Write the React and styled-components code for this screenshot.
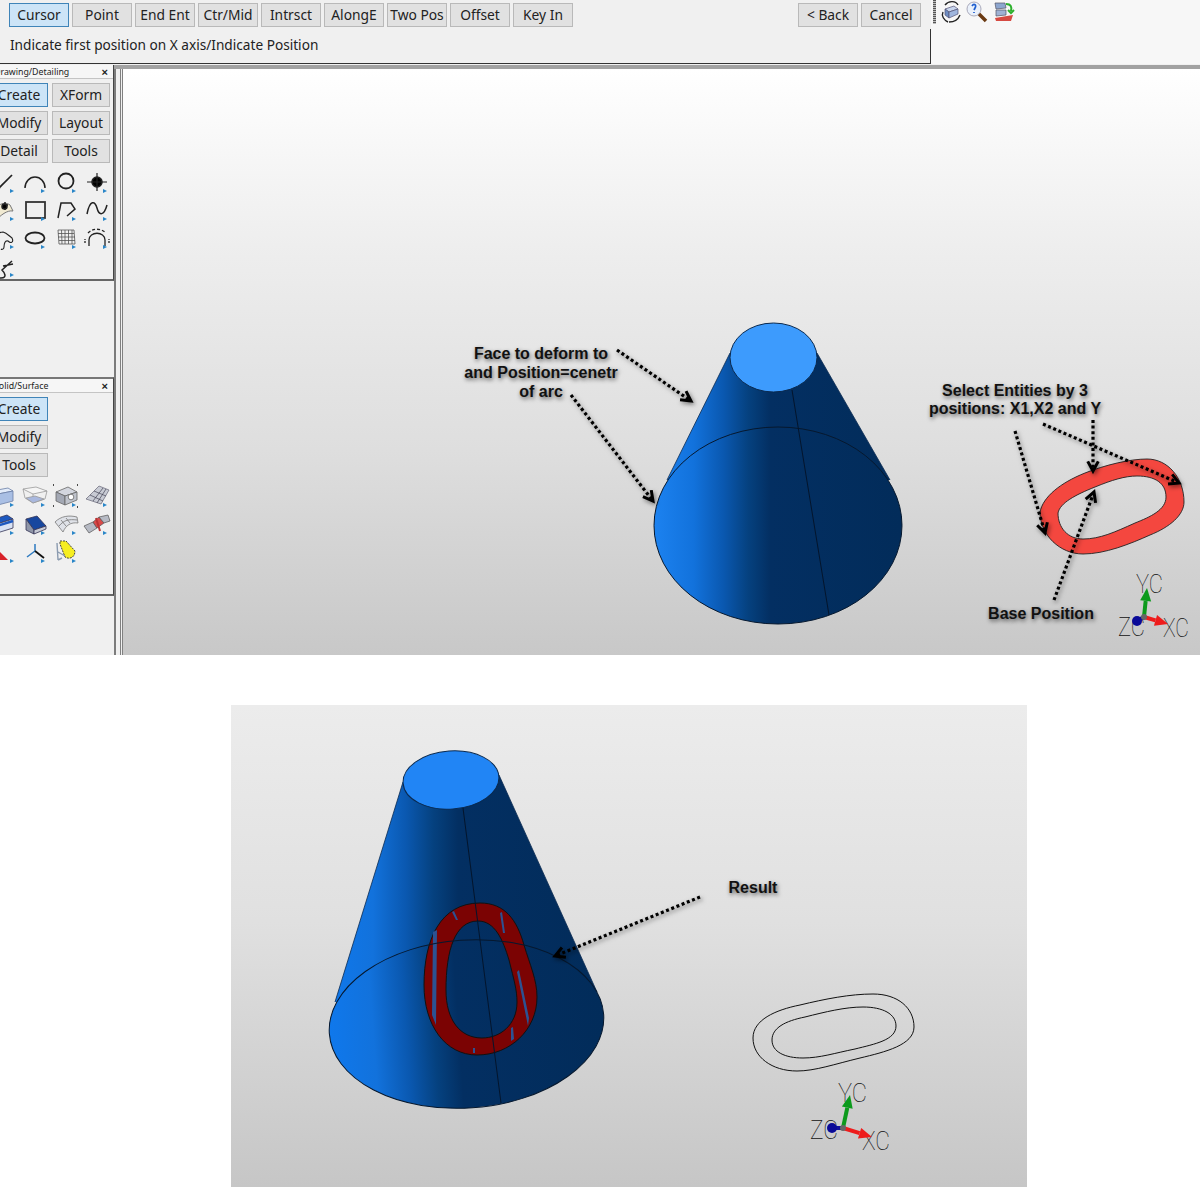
import React from "react";
import styled, { createGlobalStyle } from "styled-components";

const Global = createGlobalStyle`
  html, body { margin: 0; padding: 0; background: #fff; }
  body { font-family: "Noto Sans", "Liberation Sans", sans-serif; overflow: hidden; }
`;

const Page = styled.div`
  width: 1200px;
  height: 1187px;
  overflow: hidden;
  background: #fff;
  display: flex;
  flex-direction: column;
`;
const AppWindow = styled.div`
  width: 1200px;
  height: 655px;
  display: flex;
  flex-direction: column;
  background: #f0f0f0;
  overflow: hidden;
`;
const TopBar = styled.div`
  display: flex;
  height: 64px;
  background: #f7f7f7;
  flex: none;
`;
const PromptPanel = styled.div`
  width: 931px;
  display: flex;
  flex-direction: column;
  background: #f0f0f0;
`;
const ButtonRow = styled.div`
  height: 29px;
  box-sizing: border-box;
  padding: 3px 10px 0 9px;
  display: flex;
  gap: 3px;
`;
const Spacer = styled.div`
  flex: 1;
`;
const CadButton = styled.button`
  box-sizing: border-box;
  width: ${(p) => p.$w || 60}px;
  height: 24px;
  margin: 0;
  padding: 0 0 1px;
  flex: none;
  font: 13.8px "Noto Sans", sans-serif;
  color: #222;
  background: ${(p) => (p.$active ? "#cce4f7" : "#e1e1e1")};
  border: 1px solid ${(p) => (p.$active ? "#3f84b8" : "#b9b9b9")};
  white-space: nowrap;
`;
const PromptRow = styled.div`
  flex: 1;
  box-sizing: border-box;
  padding: 6px 0 0 10px;
  font-size: 13.65px;
  line-height: 20px;
  color: #222;
  border-right: 1px solid #333;
  border-bottom: 1px solid #333;
`;
const QuickTools = styled.div`
  display: flex;
  align-items: flex-start;
  padding-left: 2px;
`;
const Grip = styled.div`
  width: 3px;
  height: 24px;
  margin-right: 1px;
  background: repeating-linear-gradient(#555 0 1px, #bbb 1px 2px);
`;
const QuickIcon = styled.svg`
  width: 26px;
  height: 24px;
  margin-right: 1px;
  display: block;
`;
const Body = styled.div`
  flex: 1;
  display: flex;
  min-height: 0;
`;
const Sidebar = styled.div`
  width: 114px;
  flex: none;
  padding-top: 1px;
  overflow: hidden;
`;
const Dock = styled.div`
  box-sizing: border-box;
  width: 114px;
  height: ${(p) => p.$h}px;
  margin-top: ${(p) => p.$mt || 0}px;
  border-right: 1px solid #444;
  border-bottom: 2px solid #666;
  border-top: ${(p) => (p.$mt ? "2px solid #777" : "none")};
  background: #f0f0f0;
`;
const DockTitle = styled.div`
  height: 13px;
  margin-left: -6px;
  padding-right: 5px;
  display: flex;
  justify-content: space-between;
  align-items: center;
  background: #f6f6f6;
  border-bottom: 1px solid #c4c4c4;
  font-size: 8.8px;
  color: #222;
`;
const DockClose = styled.span`
  font: bold 11px "Liberation Sans", sans-serif;
`;
const DockTabs = styled.div`
  margin: 4px 0 0 -10px;
  display: grid;
  grid-template-columns: 58px 58px;
  column-gap: 4px;
  row-gap: 4px;
`;
const IconGrid = styled.div`
  margin: 5px 0 0 -11px;
  display: grid;
  grid-template-columns: repeat(4, 30px);
  column-gap: 1px;
  grid-auto-rows: 28px;
`;
const Glyph = styled.svg`
  width: 30px;
  height: 28px;
  display: block;
`;
const Workspace = styled.div`
  flex: 1;
  margin-top: 1px;
  border-top: 4px solid #a2a2a2;
  display: flex;
  min-width: 0;
`;
const Gutter = styled.div`
  box-sizing: border-box;
  width: 9px;
  flex: none;
  border-left: 2px solid #7c7c7c;
  border-right: 3px double #808080;
  background: #f0f0f0;
`;
const Viewport = styled.div`
  position: relative;
  flex: 1;
  background: linear-gradient(#ffffff 0%, #eeeeee 30%, #dedede 65%, #c8c8c8 100%);
`;
const Scene = styled.svg`
  display: block;
  width: 100%;
  height: 100%;
`;
const Callout = styled.div`
  position: absolute;
  left: ${(p) => p.$cx}px;
  top: ${(p) => p.$top}px;
  transform: translateX(-50%);
  text-align: center;
  white-space: nowrap;
  font: bold 16px/${(p) => p.$lh || 19}px "Liberation Sans", Arial, sans-serif;
  color: #111;
  text-shadow: 1px 2px 4px rgba(0, 0, 0, 0.6);
`;
const AxisLabel = styled.text`
  font-family: Roboto, "Liberation Sans", sans-serif;
  font-weight: 100;
  font-size: 25px;
  fill: #111;
`;
const ResultFigure = styled.div`
  position: relative;
  box-sizing: border-box;
  width: 796px;
  height: 482px;
  margin: 50px 0 0 231px;
  flex: none;
  background: linear-gradient(#ececec 0%, #e0e0e0 45%, #c6c6c6 100%);
`;

const Marker = () => <polygon points="21,21 25,23 21,25" fill="#2a86c8" stroke="none" />;

const Icon = ({ children }) => (
  <Glyph viewBox="0 0 30 28" fill="none" stroke="#222" strokeWidth="1.5">
    {children}
    <Marker />
  </Glyph>
);

const drawIcons = [
  <path key="a" d="M3 27 L23 7" strokeWidth="1.7" />,
  <path key="b" d="M5 20 A10 11 0 0 1 25 20" />,
  <circle key="c" cx="15" cy="13" r="7.5" strokeWidth="1.8" />,
  <g key="d"><circle cx="15" cy="14" r="5" fill="#000" /><path d="M5 14H25M15 5V23" strokeWidth="1.2" /></g>,
  <g key="e"><path d="M3 20 C6 8 16 5 21 9 L24 15 C18 14 12 19 6 25Z" fill="#f1ead2" stroke="#777" strokeWidth="1" /><path d="M13 9H19M16 6V14" /><circle cx="15.500" cy="10.500" r="2.500" fill="#000" /></g>,
  <rect key="f" x="6" y="6" width="19" height="16" stroke="#333" strokeWidth="1.8" />,
  <path key="g" d="M7 22 L10 7 L20 7 L24 13 L16 20" />,
  <path key="h" d="M5 18 C8 3 13 5 15 12 C17 20 22 20 25 9" />,
  <g key="i"><path d="M4 27 C1 20 9 19 10 14 C8 10 10 8 14 8 C18 9 20 12 23 14 C25 18 22 20 19 17 C16 16 15 20 15 23 C15 25 13 26 12 25" strokeWidth="1.1" /><path d="M6 8 C9 5 11 7 11 9" strokeWidth="1" /></g>,
  <ellipse key="j" cx="15" cy="14" rx="9.500" ry="5.500" strokeWidth="1.8" />,
  <g key="k" stroke="#555" strokeWidth="0.8"><path d="M7 6H23L24 20H8ZM7 9.500H23M7 13H24M8 16.500H24M10.500 6L11 20M14 6V20M17.500 6V20M21 6L21 20" /></g>,
  <g key="l" strokeWidth="1.300"><path d="M7 22V16 C7 7 23 7 23 16V22" /><path d="M3 19 V15 M27 19V15" strokeDasharray="2 1" /><path d="M6 9 C11 4 19 4 24 9" strokeDasharray="3 2" /></g>,
  <g key="m" strokeWidth="1.500"><path d="M4 21 C9 20 3 26 12 26 C19 26 15 20 13 18 L23 9 M14 14 L24 12" /><path d="M2 23 L8 7" stroke="#3d6fb5" strokeWidth="2.500" /></g>,
];

const solidIcons = [
  <g key="a" stroke="#6b7fa6" strokeWidth="0.8"><path d="M3 9 L19 6 L24 9 L9 12Z" fill="#e3ecfa" /><path d="M3 9 L9 12 V23 L3 20Z" fill="#7f9bcf" /><path d="M9 12 L24 9 V19 L9 23Z" fill="#a9bfe4" /></g>,
  <g key="b" stroke="#999" strokeWidth="0.800"><path d="M3 7 L16 5 L27 9 L13 12Z" fill="#f5f5f5" /><path d="M5 16 L13 21 L25 17 L27 9 M3 7 L5 16 M13 12 L13 21" /><path d="M6 16 L15 14 L24 17 L13 21Z" fill="#a9b8de" /></g>,
  <g key="c" stroke="#666" strokeWidth="0.800"><path d="M5 10 L17 5 L26 10 L14 14Z" fill="#d3d6de" /><path d="M5 10 L14 14 V23 L5 19Z" fill="#a3a8b4" /><path d="M14 14 L26 10 V18 L14 23Z" fill="#bfc3cc" /><circle cx="20" cy="15" r="2.800" fill="#fff" /><path d="M2 3H4M26 3H28M2 24H4M26 25H28" stroke="#111" strokeWidth="1.400" strokeDasharray="1 1" /></g>,
  <g key="d" stroke="#667" strokeWidth="0.700"><path d="M4 17 L17 4 L27 8 L19 22Z" fill="#c8cbd4" /><path d="M8 13 L21 19 M12 9 L24 14 M11 19 L21 6 M15 21 L24 7" stroke="#445" /></g>,
  <g key="e" stroke="#335" strokeWidth="0.800"><path d="M2 10 L18 5 L24 9 L8 14Z" fill="#1d59c0" /><path d="M2 10 L8 14 V23 L2 19Z" fill="#8e9ab4" /><path d="M8 14 L24 9 V18 L8 23Z" fill="#d8e2f4" /><path d="M8 16 L24 11" stroke="#1d59c0" strokeWidth="2.500" /></g>,
  <g key="f" stroke="#335" strokeWidth="0.800"><path d="M6 9 L17 6 L26 16 L14 20Z" fill="#17479f" /><path d="M6 9 L14 20 V24 L6 20Z" fill="#8f96a8" /><path d="M14 20 L26 16 V19 L14 24Z" fill="#c7cbd6" /></g>,
  <g key="g" stroke="#777" strokeWidth="0.800"><path d="M4 12 C10 6 18 5 26 7 L27 13 C20 12 15 15 12 22 Z" fill="#dfe2e8" /><path d="M8 16 C13 10 18 9 26 10 M15 8 L19 13 M10 10 L15 16" /></g>,
  <g key="h" stroke="#555" strokeWidth="0.700"><path d="M2 16 L11 12 L15 18 L7 23Z" fill="#b6bac4" /><path d="M11 12 L17 7 L22 13 L15 18Z" fill="#d94a4a" /><path d="M17 7 L26 5 L28 11 L22 13Z" fill="#b6bac4" /><path d="M14 8 L18 21" stroke="#b33" strokeWidth="2" /></g>,
  <g key="i" stroke="none"><path d="M5 8 L19 22 L10 22Z" fill="#d8232a" /><path d="M5 6 L9 20" stroke="#5c6e8e" strokeWidth="1.500" /></g>,
  <g key="j"><path d="M15 13 L15 6" stroke="#2d7ac0" strokeWidth="1.500" /><path d="M15 13 L7 19" stroke="#2d7ac0" strokeWidth="1.500" /><path d="M15 13 L24 20" stroke="#111" strokeWidth="1.800" /></g>,
  <g key="k" strokeWidth="1"><path d="M9 3 L15 3 L24 13 C24 19 19 22 14 19 L9 6Z" fill="#f6ee20" stroke="#444" strokeDasharray="2 1" /><path d="M6 5 L7 22 M7 14 L14 18 M7 22 L11 20" stroke="#8b9bb0" strokeWidth="1.400" /></g>,
];

const Arrow = ({ x1, y1, x2, y2 }) => {
  const a = Math.atan2(y2 - y1, x2 - x1);
  const h = 11;
  const w = 0.5;
  const p = (ang) => `${x2 - h * Math.cos(ang)} ${y2 - h * Math.sin(ang)}`;
  return (
    <g filter="url(#callShadow)">
      <line x1={x1} y1={y1} x2={x2 - 3 * Math.cos(a)} y2={y2 - 3 * Math.sin(a)} stroke="#000" strokeWidth="3.2" strokeDasharray="3 2.6" />
      <path d={`M${p(a - w)} L${x2} ${y2} L${p(a + w)}`} fill="none" stroke="#000" strokeWidth="3" />
    </g>
  );
};

const Shadow = ({ id }) => (
  <filter id={id} x="-30%" y="-30%" width="170%" height="170%">
    <feDropShadow dx="1.500" dy="2" stdDeviation="2" floodColor="#000" floodOpacity="0.5" />
  </filter>
);

const Triad = ({ ox, oy, bx, by, gx, gy, rx, ry }) => {
  const tip = (tx, ty, col) => {
    const a = Math.atan2(ty - oy, tx - ox);
    const l = 13;
    const w = 5.5;
    const bcx = tx - l * Math.cos(a);
    const bcy = ty - l * Math.sin(a);
    const nx = -Math.sin(a) * w;
    const ny = Math.cos(a) * w;
    return (
      <g>
        <line x1={ox} y1={oy} x2={bcx} y2={bcy} stroke={col} strokeWidth="4" />
        <polygon points={`${tx},${ty} ${bcx + nx},${bcy + ny} ${bcx - nx},${bcy - ny}`} fill={col} />
      </g>
    );
  };
  return (
    <g>
      {tip(gx, gy, "#0c9a1c")}
      {tip(rx, ry, "#ee1c1c")}
      <line x1={ox} y1={oy} x2={bx} y2={by} stroke="#10109c" strokeWidth="4" />
      <circle cx={bx} cy={by} r="5" fill="#0a0a98" />
      <circle cx={ox} cy={oy} r="3" fill="#666" />
    </g>
  );
};

const Axis = ({ x, y, w, children }) => (
  <AxisLabel x={x} y={y} textLength={w} lengthAdjust="spacingAndGlyphs">{children}</AxisLabel>
);

const ConeGrad = ({ id, x1, x2, c0 }) => (
  <linearGradient id={id} gradientUnits="userSpaceOnUse" x1={x1} x2={x2} y1="0" y2="0">
    <stop offset="0" stopColor={c0} />
    <stop offset="0.16" stopColor="#1272dc" />
    <stop offset="0.28" stopColor="#0a58b0" />
    <stop offset="0.38" stopColor="#05417f" />
    <stop offset="0.47" stopColor="#032f62" />
    <stop offset="1" stopColor="#022c5a" />
  </linearGradient>
);

const toolbarA = ["Point", "End Ent", "Ctr/Mid", "Intrsct", "AlongE", "Two Pos", "Offset", "Key In"];

export default function App() {
  return (
    <Page>
      <Global />
      <AppWindow>
        <TopBar>
          <PromptPanel>
            <ButtonRow>
              <CadButton $active>Cursor</CadButton>
              {toolbarA.map((t) => (
                <CadButton key={t}>{t}</CadButton>
              ))}
              <Spacer />
              <CadButton>&lt; Back</CadButton>
              <CadButton>Cancel</CadButton>
            </ButtonRow>
            <PromptRow>Indicate first position on X axis/Indicate Position</PromptRow>
          </PromptPanel>
          <QuickTools>
            <Grip />
            <QuickIcon viewBox="0 0 26 24" fill="none">
              <path d="M8 9 L17 6 L21 9 L12 12Z" fill="#c9d6ee" stroke="#557" strokeWidth=".7" />
              <path d="M8 9 L12 12 V18 L8 15Z" fill="#6f8fc4" stroke="#557" strokeWidth=".7" />
              <path d="M12 12 L21 9 V14 L12 18Z" fill="#9fb6de" stroke="#557" strokeWidth=".7" />
              <path d="M8 5 C12 0 19 1 21 5 M6 12 C4 16 7 20 11 22 M23 15 C21 20 16 22 12 22" stroke="#222" strokeWidth="1.400" />
            </QuickIcon>
            <QuickIcon viewBox="0 0 26 24" fill="none">
              <circle cx="10" cy="9" r="7" fill="#eaf1fb" stroke="#aab" strokeWidth="1" />
              <path d="M8 6 C10 3 13 5 11 8 L10 10 M10 12V13" stroke="#1f5fd0" strokeWidth="1.700" />
              <path d="M15 14 L22 21" stroke="#6a3a12" strokeWidth="3.500" />
            </QuickIcon>
            <QuickIcon viewBox="0 0 26 24" fill="none">
              <path d="M4 3 L14 3 L15 8 L5 9Z" fill="#8da6cf" stroke="#556" strokeWidth=".7" />
              <path d="M5 10 L15 10 L15 15 L5 16Z" fill="#9fb2d4" stroke="#556" strokeWidth=".7" />
              <path d="M15 4 C20 4 21 7 20 11 M17 10 L20 13 L23 10" stroke="#2bb02b" strokeWidth="2" />
              <path d="M4 18 L22 15 L20 21 L5 21Z" fill="#d64a42" />
            </QuickIcon>
          </QuickTools>
        </TopBar>
        <Body>
          <Sidebar>
            <Dock $h={216}>
              <DockTitle><span>Drawing/Detailing</span><DockClose>×</DockClose></DockTitle>
              <DockTabs>
                <CadButton $w={58} $active>Create</CadButton>
                <CadButton $w={58}>XForm</CadButton>
                <CadButton $w={58}>Modify</CadButton>
                <CadButton $w={58}>Layout</CadButton>
                <CadButton $w={58}>Detail</CadButton>
                <CadButton $w={58}>Tools</CadButton>
              </DockTabs>
              <IconGrid>
                {drawIcons.map((c, i) => <Icon key={i}>{c}</Icon>)}
              </IconGrid>
            </Dock>
            <Dock $h={219} $mt={96}>
              <DockTitle><span>Solid/Surface</span><DockClose>×</DockClose></DockTitle>
              <DockTabs>
                <CadButton $w={58} $active>Create</CadButton>
                <span />
                <CadButton $w={58}>Modify</CadButton>
                <span />
                <CadButton $w={58}>Tools</CadButton>
                <span />
              </DockTabs>
              <IconGrid>
                {solidIcons.map((c, i) => <Icon key={i}>{c}</Icon>)}
              </IconGrid>
            </Dock>
          </Sidebar>
          <Workspace>
            <Gutter />
            <Viewport>
              <Scene viewBox="123 69 1077 586">
                <defs>
                  <ConeGrad id="coneA" x1="654" x2="902" c0="#1c82f0" />
                  <Shadow id="callShadow" />
                </defs>
                <path d="M730 353 L667 480 L890 480 L817 353Z" fill="url(#coneA)" />
                <path d="M730 353 L667 480 M817 353 L890 480" stroke="#0a2a50" strokeWidth="0.800" />
                <ellipse cx="778" cy="525.500" rx="124" ry="98.500" fill="url(#coneA)" stroke="#06182e" strokeWidth="1" />
                <line x1="792" y1="390" x2="829" y2="615" stroke="#04152c" strokeWidth="1" />
                <ellipse cx="773.500" cy="357.500" rx="43.500" ry="34.500" fill="#3d9bfd" stroke="#0a2a50" strokeWidth="1" />
                <path d="M1040 512 C1043 497 1060 483 1085 473 C1105 465 1130 459 1147 459 C1168 459 1184 478 1184 502 C1184 515 1170 527 1150 535 C1130 544 1105 554 1083 554 C1060 554 1040 535 1040 512Z M1058 513 C1060 503 1075 495 1095 487 C1112 480 1125 476 1137 476 C1155 476 1166 483 1166 497 C1166 510 1150 517 1135 523 C1115 532 1100 539 1083 539 C1068 539 1058 528 1058 513Z" fill="#f4473f" fillRule="evenodd" stroke="#222" strokeWidth="0.900" />
                <Arrow x1={617} y1={350} x2={691} y2={401} />
                <Arrow x1={571} y1={395} x2={653} y2={501} />
                <Arrow x1={1015} y1={431} x2={1045} y2={533} />
                <Arrow x1={1043} y1={424} x2={1179} y2={483} />
                <Arrow x1={1093} y1={420} x2={1093} y2={471} />
                <Arrow x1={1054} y1={600} x2={1094} y2={492} />
                <Axis x={1136} y={593} w={27}>YC</Axis>
                <Axis x={1118} y={636} w={27}>ZC</Axis>
                <Axis x={1163} y={637} w={26}>XC</Axis>
                <Triad ox={1144} oy={617} bx={1137} by={621} gx={1147} gy={588} rx={1168} ry={624} />
              </Scene>
              <Callout $cx={418} $top={275}>Face to deform to<br />and Position=cenetr<br />of arc</Callout>
              <Callout $cx={892} $top={313} $lh={18}>Select Entities by 3<br />positions: X1,X2 and Y</Callout>
              <Callout $cx={918} $top={535}>Base Position</Callout>
            </Viewport>
          </Workspace>
        </Body>
      </AppWindow>
      <ResultFigure>
        <Scene viewBox="231 705 796 482">
          <defs>
            <ConeGrad id="coneB" x1="329" x2="604" c0="#0f78ec" />
          </defs>
          <path d="M403 782 L335 1002 L597 992 L499 775Z" fill="url(#coneB)" />
          <path d="M403 782 L335 1002 M499 775 L597 992" stroke="#0a2a50" strokeWidth="0.800" />
          <ellipse cx="466.500" cy="1024" rx="137.500" ry="84" transform="rotate(-4 466.500 1024)" fill="url(#coneB)" stroke="none" />
          <path d="M480 903 C505 903 517 920 524 945 C530 965 537 980 537 997 C537 1030 510 1055 477 1055 C445 1055 424 1025 424 985 C424 940 440 903 480 903Z M478 921 C495 921 503 940 509 960 C514 980 517 990 517 1002 C517 1025 500 1038 482 1038 C460 1038 446 1020 446 990 C446 950 455 921 478 921Z" fill="#7b0303" fillRule="evenodd" stroke="#111" strokeWidth="1" />
          <path d="M433 932 L437 930 L436 1025 L432 1015Z M452 912 L454 911 L458 920 L456 920Z M500 913 L502 912 L505 933 L503 933Z M517 972 L519 970 L529 1018 L528 1026Z M511 1028 L513 1027 L514 1039 L511 1041Z M473 1048 L475 1048 L475 1053 L473 1053Z" fill="#2c5292" />
          <ellipse cx="466.500" cy="1024" rx="137.500" ry="84" transform="rotate(-4 466.500 1024)" fill="none" stroke="#06182e" strokeWidth="1" />
          <line x1="463" y1="808" x2="501" y2="1103" stroke="#04152c" strokeWidth="1" />
          <ellipse cx="451" cy="780" rx="48" ry="29" transform="rotate(-4 451 780)" fill="#2185f5" stroke="#0a2a50" strokeWidth="1" />
          <Arrow x1={700} y1={897} x2={555} y2={956} />
          <path d="M753 1038 C753 1020 775 1010 800 1005 C825 999 850 994 873 994 C898 994 914 1008 914 1027 C914 1045 885 1052 860 1058 C835 1064 815 1071 797 1071 C772 1071 753 1057 753 1038Z" fill="none" stroke="#111" strokeWidth="1" />
          <path d="M772 1040 C772 1028 785 1021 805 1017 C825 1012 845 1007 863 1007 C883 1007 896 1014 896 1026 C896 1040 875 1044 855 1049 C835 1053 820 1058 803 1058 C785 1058 772 1052 772 1040Z" fill="none" stroke="#111" strokeWidth="1" />
          <Axis x={838} y={1102} w={29}>YC</Axis>
          <Axis x={810} y={1139} w={28}>ZC</Axis>
          <Axis x={862} y={1150} w={28}>XC</Axis>
          <Triad ox={843} oy={1128} bx={832} by={1128} gx={850} gy={1095} rx={872} ry={1137} />
        </Scene>
        <Callout $cx={522} $top={173}>Result</Callout>
      </ResultFigure>
    </Page>
  );
}
